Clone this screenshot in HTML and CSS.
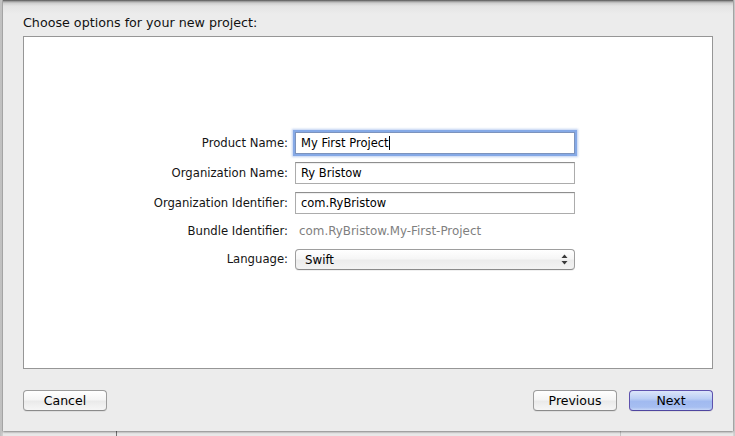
FILE: index.html
```html
<!DOCTYPE html>
<html lang="en">
<head>
<meta charset="utf-8">
<title>Choose options for your new project</title>
<link rel="stylesheet" href="styles.css">
</head>
<body>
<div class="sheet">
  <div class="title">Choose options for your new project:</div>
  <div class="panel">
    <div class="form">
      <div class="label">Product Name:</div>
      <div class="field focused"><span>My First Project</span><span class="caret"></span></div>

      <div class="label">Organization Name:</div>
      <div class="field"><span>Ry Bristow</span></div>

      <div class="label">Organization Identifier:</div>
      <div class="field"><span>com.RyBristow</span></div>

      <div class="label">Bundle Identifier:</div>
      <div class="value">com.RyBristow.My-First-Project</div>

      <div class="label">Language:</div>
      <div class="popup">
        <span>Swift</span>
        <svg class="arrows" width="7" height="11" viewBox="0 0 7 11">
          <path d="M3.5 0.5 L6.5 4 L0.5 4 Z" fill="#3a3a3a"/>
          <path d="M3.5 10.5 L6.5 7 L0.5 7 Z" fill="#3a3a3a"/>
        </svg>
      </div>
    </div>
  </div>
  <div class="buttons">
    <button class="btn cancel">Cancel</button>
    <button class="btn">Previous</button>
    <button class="btn default">Next</button>
  </div>
</div>
</body>
</html>
```

FILE: styles.css
```css
* {
  box-sizing: border-box;
}

html, body {
  margin: 0;
  padding: 0;
}

body {
  width: 735px;
  height: 436px;
  overflow: hidden;
  font-family: "DejaVu Sans", "Noto Sans", sans-serif;
  background-color: #e8e8e8;
  background-image:
    linear-gradient(to right, transparent 116px, #727272 116px, #727272 117px, transparent 117px),
    linear-gradient(to right, transparent 620px, #c4c4c4 620px, #c4c4c4 621px, transparent 621px),
    linear-gradient(to right, #bdbdbd 0, #d2d2d2 3px, transparent 3px),
    linear-gradient(to left, #c9c9c9 0, #d9d9d9 2px, transparent 2px);
}

.sheet {
  margin-left: 3px;
  width: 730px;
  height: 431px;
  display: flex;
  flex-direction: column;
  padding: 0 20px 20px 20px;
  background: linear-gradient(#4a4a4a 0, #8d8d8d 1px, #cdcdcd 3px, #e4e4e4 6px, #ececec 14px);
  box-shadow: -1px 0 0 #a4a4a4, 1px 0 0 #a4a4a4, 0 1px 2px rgba(0, 0, 0, 0.45);
}

.title {
  padding-top: 15px;
  height: 31px;
  margin-bottom: 5px;
  font-size: 12.7px;
  line-height: 16px;
  color: #111;
}

.panel {
  height: 333px;
  background: #fff;
  border: 1px solid #969696;
  padding: 95px 0 0 104px;
}

.form {
  display: grid;
  grid-template-columns: 160px 280px;
  grid-template-rows: 22px 22px 22px 18px 22px;
  column-gap: 7px;
  row-gap: 8px;
}

.label {
  text-align: right;
  font-size: 11.65px;
  line-height: 22px;
  color: #141414;
  white-space: nowrap;
  align-self: center;
}

.field {
  height: 22px;
  background: #fff;
  border: 1px solid #acacac;
  border-top-color: #8e8e8e;
  box-shadow: inset 0 1px 1px rgba(0, 0, 0, 0.07);
  padding: 0 5px;
  font-size: 11.5px;
  line-height: 20px;
  color: #000;
  display: flex;
  align-items: center;
  white-space: nowrap;
}

.field.focused {
  border-color: #7c93bd;
  box-shadow: 0 0 0 2px #85a9e6, 0 0 2px 3px rgba(110, 150, 225, 0.45);
}

.caret {
  display: inline-block;
  width: 1px;
  height: 14px;
  background: #000;
}

.value {
  font-size: 11.9px;
  line-height: 18px;
  color: #7f7f7f;
  padding-left: 4px;
  white-space: nowrap;
  align-self: center;
}

.popup {
  height: 21px;
  margin-top: 1px;
  border: 1px solid #9e9e9e;
  border-bottom-color: #8a8a8a;
  border-radius: 4px;
  background: linear-gradient(#ffffff 0, #f6f6f6 45%, #ececec 55%, #f3f3f3 100%);
  box-shadow: 0 1px 0 rgba(0, 0, 0, 0.06);
  padding: 0 6px 0 9px;
  display: flex;
  align-items: center;
  justify-content: space-between;
  font-size: 11.8px;
  color: #000;
}

.arrows {
  display: block;
}

.buttons {
  margin-top: 21px;
  display: flex;
  gap: 12px;
}

.btn {
  width: 84px;
  height: 21px;
  padding: 0;
  border: 1px solid #9c9c9c;
  border-bottom-color: #8b8b8b;
  border-radius: 4px;
  background: linear-gradient(#ffffff 0, #f5f5f5 45%, #eaeaea 55%, #f6f6f6 100%);
  box-shadow: 0 1px 0 rgba(0, 0, 0, 0.06);
  font-family: "DejaVu Sans", "Noto Sans", sans-serif;
  font-size: 12.5px;
  line-height: 19px;
  color: #000;
}

.btn.cancel {
  margin-right: auto;
}

.btn.default {
  border-color: #5e52ae;
  border-bottom-color: #4f46a0;
  background: linear-gradient(#dce6fa 0, #bccff5 40%, #a1baf0 55%, #a6bef1 85%, #c6d6f7 100%);
}
```
